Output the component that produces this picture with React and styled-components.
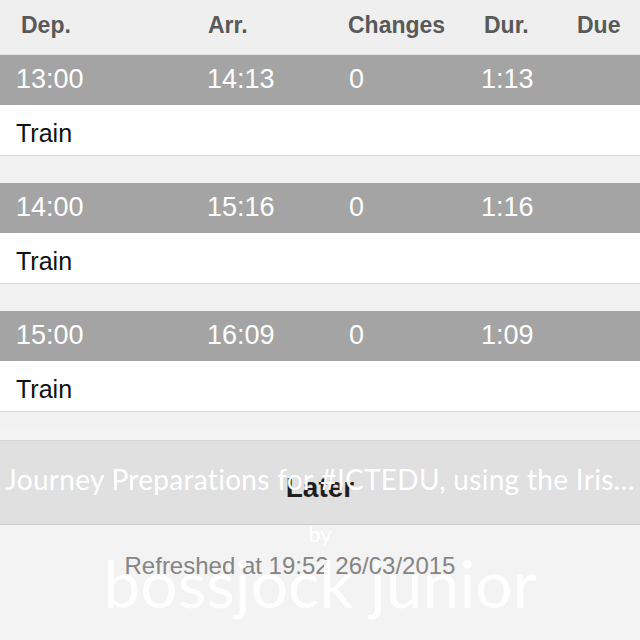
import React from "react";
import styled, { createGlobalStyle } from "styled-components";

const journeys = [
  { dep: "13:00", arr: "14:13", changes: "0", dur: "1:13" },
  { dep: "14:00", arr: "15:16", changes: "0", dur: "1:16" },
  { dep: "15:00", arr: "16:09", changes: "0", dur: "1:09" },
];

const columns = ["Dep.", "Arr.", "Changes", "Dur.", "Due"];

const App = () => {
  return (
    <Page>
      <GlobalStyle />
      <HeaderRow>
        {columns.map((c) => (
          <HeaderCell key={c}>{c}</HeaderCell>
        ))}
      </HeaderRow>
      {journeys.map((j, i) => (
        <Journey key={j.dep} last={i === journeys.length - 1}>
          <TimesBar>
            <Time>{j.dep}</Time>
            <Time>{j.arr}</Time>
            <Time>{j.changes}</Time>
            <Time>{j.dur}</Time>
            <Time />
          </TimesBar>
          <ModeRow>Train</ModeRow>
        </Journey>
      ))}
      <Footer>
        <LaterButton>Later</LaterButton>
        <Refreshed>Refreshed at 19:52 26/03/2015</Refreshed>
      </Footer>
      <Overlay>
        <OverlayTitle>Journey Preparations for #ICTEDU, using the Iris…</OverlayTitle>
        <OverlayBy>by</OverlayBy>
        <OverlayAuthor>bossjock junior</OverlayAuthor>
      </Overlay>
    </Page>
  );
};

const GlobalStyle = createGlobalStyle`
  html, body {
    margin: 0;
    padding: 0;
    background: #f2f2f2;
    font-family: "Liberation Sans", Arial, sans-serif;
  }
`;

const Page = styled.div`
  position: relative;
  width: 640px;
  height: 640px;
  overflow: hidden;
  background: #f2f2f2;
`;

const grid = `
  display: grid;
  grid-template-columns: 191px 142px 132px 95px 1fr;
  align-items: center;
`;

const HeaderRow = styled.div`
  ${grid}
  height: 55px;
  padding: 0 0 3px 21px;
  box-sizing: border-box;
  background: #efefef;
  border-bottom: 1px solid #e2e2e2;
`;

const HeaderCell = styled.div`
  font-size: 23px;
  font-weight: bold;
  color: #595959;
  &:nth-child(2) { margin-left: -4px; }
  &:nth-child(3) { margin-left: -6px; }
  &:nth-child(4) { margin-left: -2px; }
  &:nth-child(5) { margin-left: -4px; }
`;

const Journey = styled.div`
  border-bottom: 1px solid #d8d8d8;
  margin-bottom: ${(p) => (p.last ? "15px" : "27px")};
`;

const TimesBar = styled.div`
  ${grid}
  height: 50px;
  padding-left: 16px;
  padding-bottom: 2px;
  box-sizing: border-box;
  background: #a4a4a4;
`;

const Time = styled.div`
  font-size: 27px;
  color: #ffffff;
`;

const ModeRow = styled.div`
  height: 50px;
  box-sizing: border-box;
  padding: 6px 0 0 16px;
  display: flex;
  align-items: center;
  background: #ffffff;
  font-size: 25px;
  color: #111;
`;

const Footer = styled.div`
  background: #f3f3f3;
  padding-top: 13px;
  height: 230px;
`;

const LaterButton = styled.div`
  height: 85px;
  box-sizing: border-box;
  border-top: 1px solid #d6d6d6;
  border-bottom: 1px solid #cbcbcb;
  background: #e0e0e0;
  display: flex;
  align-items: center;
  justify-content: center;
  padding-top: 10px;
  font-size: 28px;
  font-weight: bold;
  color: #1e1e1e;
`;

const Refreshed = styled.div`
  margin-top: 27px;
  padding-right: 60px;
  text-align: center;
  font-size: 24px;
  color: #858585;
`;

const Overlay = styled.div`
  position: absolute;
  left: 0;
  right: 0;
  top: 460px;
  display: flex;
  flex-direction: column;
  align-items: center;
  font-family: Lato, "Open Sans", sans-serif;
  color: #ffffff;
  pointer-events: none;
`;

const OverlayTitle = styled.div`
  font-size: 28px;
  line-height: 38px;
  letter-spacing: 0.3px;
  white-space: nowrap;
`;

const OverlayBy = styled.div`
  margin-top: 22px;
  font-size: 22px;
  line-height: 28px;
`;

const OverlayAuthor = styled.div`
  font-size: 66px;
  line-height: 70px;
  margin-top: 0px;
  color: rgba(255, 255, 255, 0.9);
`;

export default App;
